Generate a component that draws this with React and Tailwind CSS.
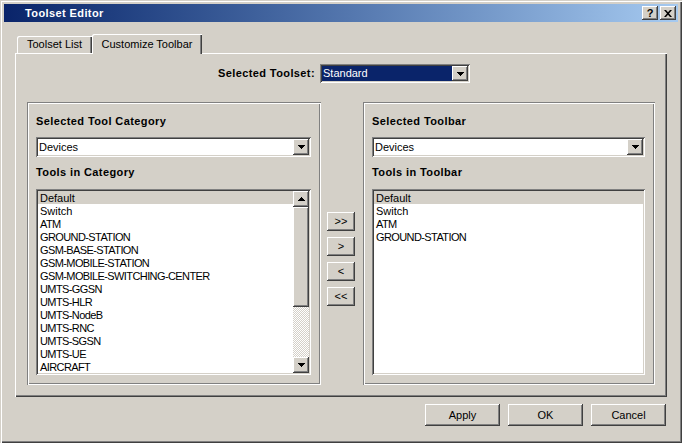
import React from "react";

const raised =
  "shadow-[inset_-1px_-1px_0_#404040,inset_1px_1px_0_#ffffff,inset_-2px_-2px_0_#808080]";
const sunken =
  "shadow-[inset_1px_1px_0_#808080,inset_-1px_-1px_0_#ffffff,inset_2px_2px_0_#404040,inset_-2px_-2px_0_#d4d0c8]";
const etched =
  "shadow-[inset_1px_1px_0_#808080,inset_-1px_-1px_0_#ffffff,inset_2px_2px_0_#ffffff,inset_-2px_-2px_0_#808080]";

function DownArrow() {
  return (
    <svg width="7" height="4" viewBox="0 0 7 4" shapeRendering="crispEdges">
      <rect x="0" y="0" width="7" height="1" fill="#000" />
      <rect x="1" y="1" width="5" height="1" fill="#000" />
      <rect x="2" y="2" width="3" height="1" fill="#000" />
      <rect x="3" y="3" width="1" height="1" fill="#000" />
    </svg>
  );
}

function UpArrow() {
  return (
    <svg width="7" height="4" viewBox="0 0 7 4" shapeRendering="crispEdges">
      <rect x="3" y="0" width="1" height="1" fill="#000" />
      <rect x="2" y="1" width="3" height="1" fill="#000" />
      <rect x="1" y="2" width="5" height="1" fill="#000" />
      <rect x="0" y="3" width="7" height="1" fill="#000" />
    </svg>
  );
}

function DropBtn() {
  return (
    <div
      className={`w-[16px] h-[16px] m-[2px] bg-[#d4d0c8] flex items-center justify-center shrink-0 ${raised}`}
    >
      <DownArrow />
    </div>
  );
}

function Combo({ value }) {
  return (
    <div className={`h-[20px] flex items-center bg-white ${sunken}`}>
      <div className="flex-1 pl-[3px] text-[11px] leading-[13px] text-black">
        {value}
      </div>
      <DropBtn />
    </div>
  );
}

function ListBox({ items, scroll }) {
  return (
    <div className={`h-[186px] bg-white p-[2px] flex ${sunken}`}>
      <div className="flex-1 flex flex-col overflow-hidden">
        {items.map((it, i) => (
          <div
            key={it.t}
            className={`h-[13px] leading-[14px] pl-[2px] text-[11px] whitespace-nowrap ${
              i === 0 ? "bg-[#d4d0c8]" : ""
            } ${it.caps ? "tracking-[-0.6px]" : ""}`}
          >
            {it.t}
          </div>
        ))}
      </div>
      {scroll && (
        <div className="w-[16px] flex flex-col">
          <div
            className={`h-[16px] bg-[#d4d0c8] flex items-center justify-center ${raised}`}
          >
            <UpArrow />
          </div>
          <div className={`h-[100px] bg-[#d4d0c8] ${raised}`} />
          <div className="flex-1 bg-[repeating-conic-gradient(#d4d0c8_0_25%,#ffffff_0_50%)] bg-[length:2px_2px]" />
          <div
            className={`h-[16px] bg-[#d4d0c8] flex items-center justify-center ${raised}`}
          >
            <DownArrow />
          </div>
        </div>
      )}
    </div>
  );
}

function GroupBox({ w, title, sub, items, scroll, pr }) {
  return (
    <div
      className={`h-[283px] pt-[13px] pl-[9px] ${pr} flex flex-col ${etched} ${w}`}
    >
      <div className="h-[13px] leading-[13px] text-[11px] font-bold tracking-[0.4px]">
        {title}
      </div>
      <div className="mt-[9px]">
        <Combo value="Devices" />
      </div>
      <div className="mt-[9px] h-[13px] leading-[13px] text-[11px] font-bold tracking-[0.4px]">
        {sub}
      </div>
      <div className="mt-[10px]">
        <ListBox items={items} scroll={scroll} />
      </div>
    </div>
  );
}

function Btn({ children, w, h }) {
  return (
    <div
      className={`${w} ${h} bg-[#d4d0c8] flex items-center justify-center text-[11px] leading-[13px] ${raised}`}
    >
      {children}
    </div>
  );
}

const leftItems = [
  { t: "Default" },
  { t: "Switch" },
  { t: "ATM", caps: true },
  { t: "GROUND-STATION", caps: true },
  { t: "GSM-BASE-STATION", caps: true },
  { t: "GSM-MOBILE-STATION", caps: true },
  { t: "GSM-MOBILE-SWITCHING-CENTER", caps: true },
  { t: "UMTS-GGSN", caps: true },
  { t: "UMTS-HLR", caps: true },
  { t: "UMTS-NodeB", caps: true },
  { t: "UMTS-RNC", caps: true },
  { t: "UMTS-SGSN", caps: true },
  { t: "UMTS-UE", caps: true },
  { t: "AIRCRAFT", caps: true },
];

const rightItems = [
  { t: "Default" },
  { t: "Switch" },
  { t: "ATM", caps: true },
  { t: "GROUND-STATION", caps: true },
];

export default function App() {
  return (
    <div className="w-[682px] h-[443px] bg-[#d4d0c8] p-[4px] flex flex-col text-black font-['Liberation_Sans',Arial,sans-serif] shadow-[inset_1px_1px_0_#d4d0c8,inset_2px_2px_0_#ffffff,inset_-1px_-1px_0_#404040,inset_-2px_-2px_0_#808080]">
      {/* Title bar */}
      <div className="h-[18px] flex items-center bg-gradient-to-r from-[#0a246a] to-[#a6caf0] pr-[2px]">
        <div className="flex-1 pl-[21px] text-white font-bold text-[11px] leading-[13px] tracking-[0.4px]">
          Toolset Editor
        </div>
        <div className="flex gap-[2px]">
          <div
            className={`w-[16px] h-[14px] bg-[#d4d0c8] flex items-center justify-center text-[11px] font-bold leading-[11px] ${raised}`}
          >
            ?
          </div>
          <div
            className={`w-[16px] h-[14px] bg-[#d4d0c8] flex items-center justify-center ${raised}`}
          >
            <svg width="8" height="7" viewBox="0 0 8 7">
              <path
                d="M0 0h2l2 2.3 2-2.3h2l-3 3.5 3 3.5h-2l-2-2.3-2 2.3h-2l3-3.5z"
                fill="#000"
              />
            </svg>
          </div>
        </div>
      </div>

      {/* Tabs + panel */}
      <div className="px-[11px] pt-[12px]">
        <div className="h-[19px] flex items-end pl-[2px]">
          <div className="w-[75px] h-[17px] flex items-center justify-center text-[11px] leading-[13px] rounded-tl-[2px] shadow-[inset_1px_1px_0_#ffffff,inset_-1px_0_0_#404040,inset_-2px_0_0_#808080]">
            Toolset List
          </div>
          <div className="relative z-10 w-[110px] h-[20px] -mb-[1px] bg-[#d4d0c8] flex items-start pt-[4px] justify-center text-[11px] leading-[13px] rounded-tl-[2px] shadow-[inset_1px_1px_0_#ffffff,inset_-1px_0_0_#404040,inset_-2px_0_0_#808080]">
            Customize Toolbar
          </div>
        </div>
        <div className="w-[652px] h-[344px] px-[12px] pt-[11px] shadow-[inset_1px_1px_0_#ffffff,inset_-1px_-1px_0_#404040,inset_-2px_-2px_0_#808080]">
          <div className="h-[19px] flex items-center">
            <div className="w-[293px] pr-[5px] text-right text-[11px] font-bold leading-[13px] tracking-[0.4px]">
              Selected Toolset:
            </div>
            <div className="w-[150px] h-[19px]">
              <div className={`h-[19px] flex items-center bg-[#0a246a] ${sunken}`}>
                <div className="flex-1 pl-[3px] text-[11px] leading-[13px] text-white">
                  Standard
                </div>
                <div
                  className={`w-[16px] h-[15px] m-[2px] bg-[#d4d0c8] flex items-center justify-center shrink-0 ${raised}`}
                >
                  <DownArrow />
                </div>
              </div>
            </div>
          </div>

          <div className="mt-[19px] flex">
            <GroupBox
              w="w-[294px]"
              pr="pr-[10px]"
              title="Selected Tool Category"
              sub="Tools in Category"
              items={leftItems}
              scroll
            />
            <div className="w-[28px] ml-[6px] mr-[8px] pt-[110px] flex flex-col gap-[6px]">
              <Btn w="w-[28px]" h="h-[19px]">&gt;&gt;</Btn>
              <Btn w="w-[28px]" h="h-[19px]">&gt;</Btn>
              <Btn w="w-[28px]" h="h-[19px]">&lt;</Btn>
              <Btn w="w-[28px]" h="h-[19px]">&lt;&lt;</Btn>
            </div>
            <GroupBox
              w="w-[292px]"
              pr="pr-[10px]"
              title="Selected Toolbar"
              sub="Tools in Toolbar"
              items={rightItems}
            />
          </div>
        </div>
      </div>

      {/* Bottom buttons */}
      <div className="mt-[7px] pr-[12px] flex justify-end gap-[8px]">
        <Btn w="w-[75px]" h="h-[22px]">Apply</Btn>
        <Btn w="w-[75px]" h="h-[22px]">OK</Btn>
        <Btn w="w-[75px]" h="h-[22px]">Cancel</Btn>
      </div>
    </div>
  );
}
